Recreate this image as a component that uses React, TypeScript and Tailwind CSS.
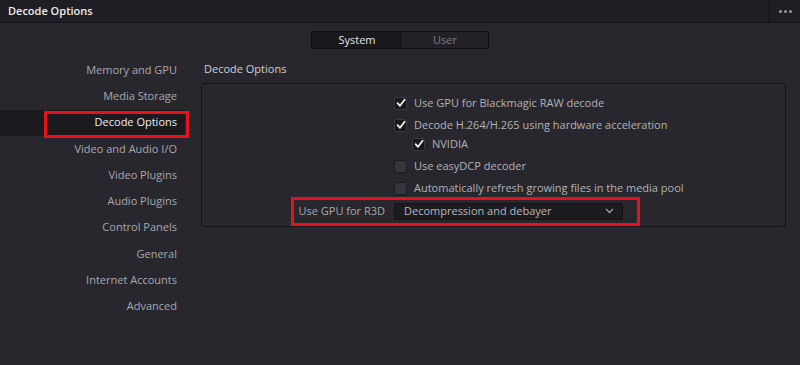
import React from 'react';

const navItems = [
  'Memory and GPU',
  'Media Storage',
  'Decode Options',
  'Video and Audio I/O',
  'Video Plugins',
  'Audio Plugins',
  'Control Panels',
  'General',
  'Internet Accounts',
  'Advanced',
];

function Check({ checked }: { checked: boolean }) {
  return (
    <div
      className={
        'w-[13px] h-[13px] rounded-[2px] border flex items-center justify-center shrink-0 ' +
        (checked ? 'bg-[#19181d] border-[#3b3a41]' : 'bg-[#36353c] border-[#1d1c21]')
      }
    >
      {checked && (
        <svg width="10" height="10" viewBox="0 0 10 10">
          <path d="M1.6 5.2 L4 7.8 L8.6 1.8" fill="none" stroke="#f2f2f2" strokeWidth="1.8" strokeLinecap="round" strokeLinejoin="round" />
        </svg>
      )}
    </div>
  );
}

function Option({ checked, label, indent }: { checked: boolean; label: string; indent?: boolean }) {
  return (
    <div className={'flex items-center gap-[7px] ' + (indent ? 'pl-[18px]' : '')}>
      <Check checked={checked} />
      <span>{label}</span>
    </div>
  );
}

export default function App() {
  return (
    <div
      className="w-[800px] h-[365px] bg-[#28272e] flex flex-col text-[11px] text-[#b3b3b6] overflow-hidden"
      style={{ fontFamily: '"Open Sans", "Noto Sans", sans-serif' }}
    >
      {/* title bar */}
      <div className="h-[23px] bg-[#1f1e24] border-b border-[#131216] flex items-stretch shrink-0">
        <div className="flex-1 flex items-center pl-[8px] text-[#ececec] font-semibold">Decode Options</div>
        <div className="w-[31px] border-l border-[#131216] flex items-center justify-center gap-[2px]">
          <span className="w-[3px] h-[3px] rounded-full bg-[#9a9a9e]" />
          <span className="w-[3px] h-[3px] rounded-full bg-[#9a9a9e]" />
          <span className="w-[3px] h-[3px] rounded-full bg-[#9a9a9e]" />
        </div>
      </div>

      {/* tabs */}
      <div className="flex justify-center pt-[8px] shrink-0">
        <div className="flex w-[178px] h-[18px] border border-[#111014] rounded-[2px] overflow-hidden">
          <div className="w-[90px] bg-[#19181c] text-[#e6e6e6] flex items-center justify-center">System</div>
          <div className="flex-1 bg-[#222127] text-[#7d7d82] flex items-center justify-center">User</div>
        </div>
      </div>

      <div className="flex pt-[8px]">
        {/* sidebar */}
        <div className="w-[185px] flex flex-col shrink-0">
          {navItems.map((item) =>
            item === 'Decode Options' ? (
              <div key={item} className="relative h-[26.25px] bg-[#1b1a1f] flex items-center justify-end pr-[8px] text-[#eeeeee]">
                {item}
                <div className="absolute left-[44px] top-[1px] w-[145px] h-[27px] border-[3px] border-[#e8121c]" />
              </div>
            ) : (
              <div key={item} className="h-[26.25px] flex items-center justify-end pr-[8px] text-[#a9a9ad]">
                {item}
              </div>
            )
          )}
        </div>

        {/* content */}
        <div className="ml-[16px] w-[585px] flex flex-col">
          <div className="h-[26px] flex items-center pl-[3px] pb-[2px] text-[#d0d0d3]">Decode Options</div>
          <div className="h-[144px] border border-[#151418] rounded-[3px] flex flex-col pt-[8px]">
            <div className="pl-[192px] flex flex-col">
              <div className="h-[22px] flex items-center"><Option checked label="Use GPU for Blackmagic RAW decode" /></div>
              <div className="h-[22px] flex items-center"><Option checked label="Decode H.264/H.265 using hardware acceleration" /></div>
              <div className="h-[16px] flex items-center"><Option checked indent label="NVIDIA" /></div>
              <div className="h-[22px] mt-[3px] flex items-center"><Option checked={false} label="Use easyDCP decoder" /></div>
              <div className="h-[22px] flex items-center"><Option checked={false} label="Automatically refresh growing files in the media pool" /></div>
            </div>
            <div className="relative h-[22px] mt-[1px] flex items-center">
              <div className="w-[192px] text-right pr-[9px] text-[#a9a9ad]">Use GPU for R3D</div>
              <div className="w-[229px] h-[17px] bg-[#1c1b20] border border-[#141317] rounded-[2px] flex items-center justify-between pl-[9px] pr-[8px] text-[#b8b8bb]">
                <span>Decompression and debayer</span>
                <svg width="9" height="6" viewBox="0 0 9 6">
                  <path d="M1 1 L4.5 4.5 L8 1" fill="none" stroke="#a0a0a4" strokeWidth="1.3" />
                </svg>
              </div>
              <div className="absolute left-[89px] top-[-3px] w-[349px] h-[29px] border-[3px] border-[#e8121c]" />
            </div>
          </div>
        </div>
      </div>
    </div>
  );
}
